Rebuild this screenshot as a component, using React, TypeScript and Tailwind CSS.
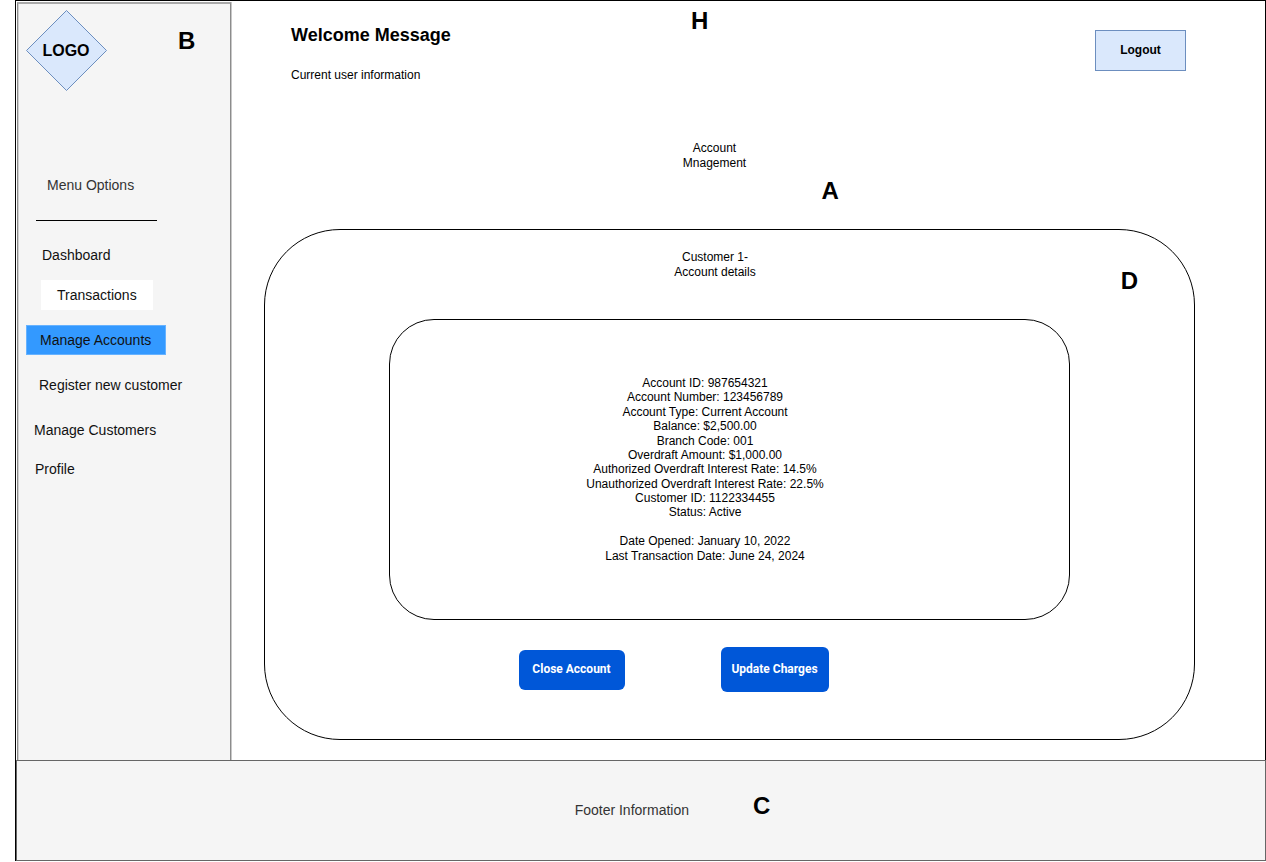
const details: string[][] = [
  ["Account ID: 987654321", "Account Number: 123456789"],
  ["Account Type: Current Account", "Balance: $2,500.00"],
  ["Branch Code: 001", "Overdraft Amount: $1,000.00", "Authorized Overdraft Interest Rate: 14.5%"],
  ["Unauthorized Overdraft Interest Rate: 22.5%", "Customer ID: 1122334455", "Status: Active"],
];

const dates = ["Date Opened: January 10, 2022", "Last Transaction Date: June 24, 2024"];

function Marker({ children }: { children: string }) {
  return <span className="text-2xl leading-7 font-bold">{children}</span>;
}

function Logo() {
  return (
    <div className="grid size-[82px] place-items-center">
      <svg viewBox="0 0 82 82" className="col-start-1 row-start-1 size-full" aria-hidden="true">
        <path d="M40.5 0.5 L80.5 40.5 L40.5 80.5 L0.5 40.5 Z" fill="#dae8fc" stroke="#6c8ebf" />
      </svg>
      <span className="col-start-1 row-start-1 pr-0.5 text-base leading-5 font-bold">LOGO</span>
    </div>
  );
}

function Sidebar() {
  const link = "flex h-[30px] items-center";
  return (
    <aside className="mt-px mr-px ml-px w-[214px] shrink-0 border-x border-t-2 border-x-[#8c8c8c] border-t-[#a9a9a9] bg-[#f5f5f5] pl-2 shadow-[inset_1px_0_#d0d0d0,1px_0_#c8c8c8]">
      <div className="flex items-start gap-[70px] pt-[6px]">
        <Logo />
        <div className="pt-[17px]">
          <Marker>B</Marker>
        </div>
      </div>
      <h2 className="mt-[83px] pl-[21px] text-sm text-[#333333]">Menu Options</h2>
      <hr className="mt-[25px] ml-[10px] w-[121px] border-black" />
      <nav className="mt-[19px] flex flex-col items-start text-sm text-[#111111]">
        <a href="#dashboard" className={`${link} pl-4`}>Dashboard</a>
        <a href="#transactions" className={`${link} mt-[10px] ml-[15px] bg-white px-4`}>Transactions</a>
        <a href="#accounts" aria-current="page" className={`${link} mt-[15px] border border-[#66b2ff] bg-[#3399ff] pr-[14px] pl-[13px]`}>
          Manage Accounts
        </a>
        <a href="#register" className={`${link} mt-[15px] pl-[13px]`}>Register new customer</a>
        <a href="#customers" className={`${link} mt-[15px] pl-2`}>Manage Customers</a>
        <a href="#profile" className={`${link} mt-[9px] pl-[9px]`}>Profile</a>
      </nav>
    </aside>
  );
}

export default function App() {
  return (
    <div className="bg-white pl-[15px] font-['Liberation_Sans',Arial,sans-serif] text-xs leading-[15px] text-black">
      <div className="border-t border-l border-black">
        <div className="flex border-r border-black">
          <Sidebar />
          <main className="min-w-0 grow pr-[70px] pb-5 pl-8">
            <header className="flex items-start pr-[9px] pl-[27px]">
              <div className="w-[400px] pt-[23px]">
                <h1 className="text-lg leading-[22px] font-bold">Welcome Message</h1>
                <p className="mt-[22px]">Current user information</p>
              </div>
              <div className="pt-[6px]">
                <Marker>H</Marker>
              </div>
              <button type="button" className="mt-[29px] ml-auto h-[41px] w-[91px] border border-[#6c8ebf] bg-[#dae8fc] font-bold">
                Logout
              </button>
            </header>
            <div className="mt-[58px] grid grid-cols-[1fr_64px_1fr] pr-[30px]">
              <h2 className="col-start-2 text-center">Account Mnagement</h2>
              <div className="pt-9 pl-[75px]">
                <Marker>A</Marker>
              </div>
            </div>
            <section className="mt-6 rounded-[76px] border border-black pt-5 pb-[47px]">
              <div className="grid grid-cols-[1fr_84px_1fr] pr-[29px]">
                <h3 className="col-start-2 text-center">Customer 1- Account details</h3>
                <div className="-mr-[29px] flex justify-end pt-[17px] pr-14">
                  <Marker>D</Marker>
                </div>
              </div>
              <div className="mx-[124px] mt-6 flex flex-col items-center gap-px rounded-[45px] border border-black pt-14 pr-[49px] pb-14 leading-[14px]">
                {details.map((group) => (
                  <ul key={group[0]} className="text-center">
                    {group.map((line) => (
                      <li key={line}>{line}</li>
                    ))}
                  </ul>
                ))}
                <ul className="mt-[14px] flex flex-col gap-px text-center">
                  {dates.map((line) => (
                    <li key={line}>{line}</li>
                  ))}
                </ul>
              </div>
              <div className="mt-[27px] flex items-center justify-center gap-24 pr-28 font-['Roboto',sans-serif] font-bold text-white">
                <button type="button" className="h-10 w-[106px] rounded-md bg-[#0057d8]">Close Account</button>
                <button type="button" className="h-[45px] w-[108px] rounded-md bg-[#0057d8]">Update Charges</button>
              </div>
            </section>
          </main>
        </div>
        <footer className="flex h-[101px] items-center justify-center gap-16 border border-[#666666] bg-[#f5f5f5] pb-px pl-[63px] text-sm">
          <p className="text-[#333333]">Footer Information</p>
          <div className="pb-2">
            <Marker>C</Marker>
          </div>
        </footer>
      </div>
    </div>
  );
}
